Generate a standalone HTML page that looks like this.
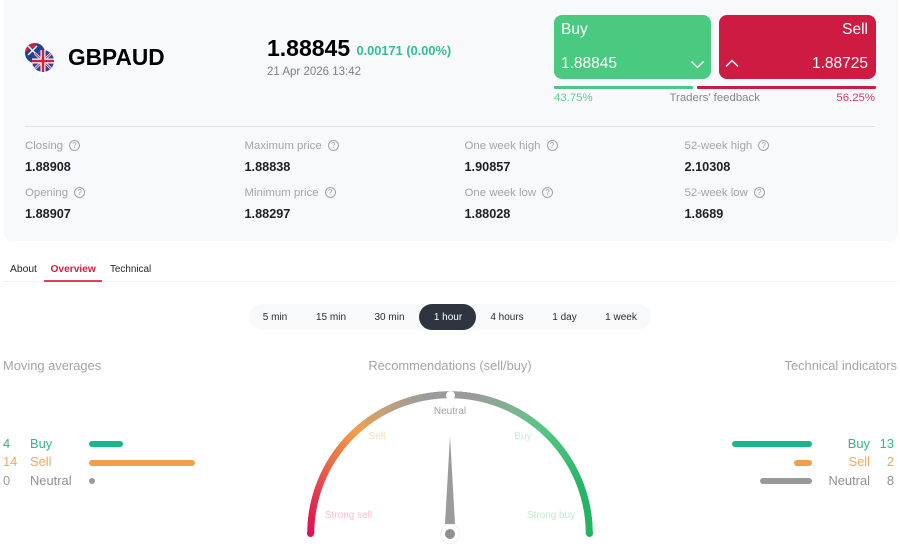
<!DOCTYPE html>
<html><head><meta charset="utf-8"><style>
*{box-sizing:border-box;margin:0;padding:0}
html,body{width:900px;height:549px;overflow:hidden;background:#fff;font-family:"Liberation Sans",sans-serif}
#p{position:relative;width:900px;height:549px;overflow:hidden;background:#fff}
.a{position:absolute;white-space:nowrap}
.lab{font-size:11.400px;color:#a3a5aa;line-height:14px}
.val{font-size:12.700px;font-weight:bold;color:#1d2024;line-height:14px}
.q{display:inline-block;width:11px;height:11px;border:1px solid #a3a5aa;border-radius:50%;font-size:8px;line-height:9px;text-align:center;margin:1px 0 0 6px;vertical-align:top;color:#a3a5aa}
.t{font-size:10px;line-height:12px;color:#2a2d33;transform:translateX(-50%)}
.h{font-size:12.900px;color:#a3a5aa;line-height:15px}
.row{font-size:12.900px;line-height:15px}
.bar{position:absolute;height:6px;border-radius:3px}
</style></head><body><div id="p">
<div class="a" style="left:4px;top:0;width:894px;height:241px;background:#f8f9fb;border-radius:0 0 8px 8px"></div>

<svg class="a" style="left:24px;top:42px" width="32" height="32" viewBox="0 0 32 32">
<circle cx="11" cy="11" r="10" fill="#23408e"/>
<path d="M1 11A10 10 0 0 1 11 1L14 5 6 6z" fill="#d8203a"/>
<path d="M4 4L13 13M13 4L4 13" stroke="#fff" stroke-width="1.500"/>
<circle cx="19" cy="19" r="11" fill="#264a9a"/>
<path d="M11 11.500L27 26.500M27 11.500L11 26.500" stroke="#fff" stroke-width="2.400"/>
<path d="M11 11.500L27 26.500M27 11.500L11 26.500" stroke="#d8203a" stroke-width="1"/>
<path d="M19 8V30M8 19H30" stroke="#fff" stroke-width="5"/>
<path d="M19 8V30M8 19H30" stroke="#d8203a" stroke-width="2.600"/>
</svg>
<div class="a" style="left:68px;top:44px;font-size:22.700px;font-weight:bold;color:#000;line-height:26px">GBPAUD</div>

<div class="a" style="left:267px;top:35px;font-size:23px;font-weight:bold;color:#000;line-height:26px">1.88845</div>
<div class="a" style="left:356.500px;top:44px;font-size:12.800px;font-weight:bold;color:#2fbf92;line-height:14px">0.00171 (0.00%)</div>
<div class="a" style="left:267px;top:65px;font-size:11.500px;color:#7c7f85;line-height:14px">21 Apr 2026 13:42</div>

<div class="a" style="left:554px;top:15px;width:157px;height:64px;background:#4aca80;border-radius:8px"></div>
<div class="a" style="left:718.500px;top:15px;width:157px;height:64px;background:#cd1b41;border-radius:8px"></div>
<div class="a" style="left:561px;top:21px;font-size:15.500px;color:#fff;line-height:18px">Buy</div>
<div class="a" style="right:32px;top:21px;font-size:15.500px;color:#fff;line-height:18px">Sell</div>
<div class="a" style="left:561px;top:55px;font-size:15.500px;color:#fff;line-height:18px">1.88845</div>
<div class="a" style="right:32px;top:55px;font-size:15.500px;color:#fff;line-height:18px">1.88725</div>
<svg class="a" style="left:690px;top:60px" width="16" height="10"><path d="M1.500 1.500L7.500 7.500L13.500 1.500" fill="none" stroke="#fff" stroke-width="1.500"/></svg>
<svg class="a" style="left:725px;top:59px" width="16" height="10"><path d="M1 7.500L7 1.500L13 7.500" fill="none" stroke="#fff" stroke-width="1.500"/></svg>
<div class="a" style="left:554px;top:86px;width:138.500px;height:3px;background:#4aca80;border-radius:1px"></div>
<div class="a" style="left:697px;top:86px;width:178.500px;height:3px;background:#cd1b41;border-radius:1px"></div>
<div class="a" style="left:554px;top:91px;font-size:11.400px;color:#5fce8f;line-height:14px">43.75%</div>
<div class="a" style="left:669.500px;top:91px;font-size:11.400px;color:#85878c;line-height:14px">Traders' feedback</div>
<div class="a" style="right:25px;top:91px;font-size:11.400px;color:#d63a60;line-height:14px">56.25%</div>

<div class="a" style="left:25px;top:126px;width:850px;height:1px;background:#e1e3e7"></div>

<div class="a lab" style="left:25px;top:139px">Closing<span class="q">?</span></div>
<div class="a val" style="left:25px;top:160px">1.88908</div>
<div class="a lab" style="left:25px;top:186px">Opening<span class="q">?</span></div>
<div class="a val" style="left:25px;top:207px">1.88907</div>
<div class="a lab" style="left:244.500px;top:139px">Maximum price<span class="q">?</span></div>
<div class="a val" style="left:244.500px;top:160px">1.88838</div>
<div class="a lab" style="left:244.500px;top:186px">Minimum price<span class="q">?</span></div>
<div class="a val" style="left:244.500px;top:207px">1.88297</div>
<div class="a lab" style="left:464.500px;top:139px">One week high<span class="q">?</span></div>
<div class="a val" style="left:464.500px;top:160px">1.90857</div>
<div class="a lab" style="left:464.500px;top:186px">One week low<span class="q">?</span></div>
<div class="a val" style="left:464.500px;top:207px">1.88028</div>
<div class="a lab" style="left:684.500px;top:139px">52-week high<span class="q">?</span></div>
<div class="a val" style="left:684.500px;top:160px">2.10308</div>
<div class="a lab" style="left:684.500px;top:186px">52-week low<span class="q">?</span></div>
<div class="a val" style="left:684.500px;top:207px">1.8689</div>

<div class="a" style="left:3px;top:281px;width:894px;height:1px;background:#f1f2f4"></div>
<div class="a" style="left:10px;top:263px;font-size:10.300px;color:#23262b;line-height:13px">About</div>
<div class="a" style="left:50.500px;top:263px;font-size:10.200px;font-weight:bold;color:#d2204a;line-height:13px">Overview</div>
<div class="a" style="left:110px;top:263px;font-size:9.900px;color:#23262b;line-height:13px">Technical</div>
<div class="a" style="left:43.500px;top:280px;width:58.500px;height:2px;background:#e0405f"></div>

<div class="a" style="left:249px;top:304px;width:402px;height:26px;background:#f8f9fb;border-radius:13px"></div>
<div class="a" style="left:419px;top:304px;width:57px;height:26px;background:#2f3441;border-radius:13px"></div>
<div class="a t" style="left:275px;top:312px">5 min</div>
<div class="a t" style="left:331px;top:312px">15 min</div>
<div class="a t" style="left:389.500px;top:312px">30 min</div>
<div class="a t" style="left:448px;top:312px;color:#fff">1 hour</div>
<div class="a t" style="left:507px;top:312px">4 hours</div>
<div class="a t" style="left:564.500px;top:312px">1 day</div>
<div class="a t" style="left:621px;top:312px">1 week</div>

<div class="a h" style="left:3px;top:358px">Moving averages</div>
<div class="a h" style="left:450px;top:358px;transform:translateX(-50%)">Recommendations (sell/buy)</div>
<div class="a h" style="right:3px;top:358px">Technical indicators</div>

<div class="a row" style="left:3px;top:436px;color:#2bb98e">4</div>
<div class="a row" style="left:30px;top:436px;color:#2bb98e">Buy</div>
<div class="bar" style="left:89px;top:441px;width:34px;background:#18b68c"></div>
<div class="a row" style="left:3px;top:454px;color:#f2a85f">14</div>
<div class="a row" style="left:30px;top:454px;color:#f2a85f">Sell</div>
<div class="bar" style="left:89px;top:459.500px;width:106px;background:#f29f4b"></div>
<div class="a row" style="left:3px;top:473px;color:#9a9ca1">0</div>
<div class="a row" style="left:30px;top:473px;color:#8f9197">Neutral</div>
<div class="bar" style="left:89px;top:478px;width:6px;background:#999"></div>

<div class="a row" style="right:30px;top:436px;color:#2bb98e">Buy</div>
<div class="a row" style="right:6px;top:436px;color:#2bb98e">13</div>
<div class="bar" style="left:732px;top:441px;width:79.500px;background:#18b68c"></div>
<div class="a row" style="right:30px;top:454px;color:#f2a85f">Sell</div>
<div class="a row" style="right:6px;top:454px;color:#f2a85f">2</div>
<div class="bar" style="left:793.500px;top:459.500px;width:18px;background:#f29f4b"></div>
<div class="a row" style="right:30px;top:473px;color:#8f9197">Neutral</div>
<div class="a row" style="right:6px;top:473px;color:#8f9197">8</div>
<div class="bar" style="left:760px;top:478px;width:51.500px;background:#999"></div>

<div class="a" style="left:307px;top:391px;width:286px;height:143px;overflow:hidden">
<div style="width:286px;height:143px;border-radius:143px 143px 0 0;background:conic-gradient(from 270deg at 143px 143px,#e01157 0deg,#e0304f 14deg,#ea7349 33deg,#f29f4b 48deg,#bfa27c 62deg,#9b9b9b 80deg,#9b9b9b 100deg,#7fb291 116deg,#55c585 132deg,#27b567 160deg,#20b460 180deg,#20b460 360deg);-webkit-mask:radial-gradient(circle 143px at 143px 143px,transparent 135.500px,#000 136px,#000 142.700px,transparent 143px);mask:radial-gradient(circle 143px at 143px 143px,transparent 135.500px,#000 136px,#000 142.700px,transparent 143px)"></div>
</div>
<div class="a" style="left:307px;top:530.300px;width:7.200px;height:7.200px;border-radius:50%;background:#e01157"></div>
<div class="a" style="left:585.800px;top:530.300px;width:7.200px;height:7.200px;border-radius:50%;background:#20b460"></div>
<div class="a" style="left:445.500px;top:390.500px;width:9px;height:9px;border-radius:50%;background:#fff"></div>

<div class="a" style="left:450px;top:406px;font-size:10px;line-height:12px;color:#a0a1a5;transform:translateX(-50%)">Neutral</div>
<div class="a" style="left:377px;top:431px;font-size:10px;line-height:12px;color:#f8dcbc;transform:translateX(-50%)">Sell</div>
<div class="a" style="left:523px;top:431px;font-size:10px;line-height:12px;color:#c9ecdd;transform:translateX(-50%)">Buy</div>
<div class="a" style="left:348.500px;top:510px;font-size:10px;line-height:12px;color:#f9bfd2;transform:translateX(-50%)">Strong sell</div>
<div class="a" style="left:551px;top:510px;font-size:10px;line-height:12px;color:#c0ebd3;transform:translateX(-50%)">Strong buy</div>

<svg class="a" style="left:430px;top:430px;display:block" width="40" height="119" viewBox="0 0 40 119">
<path d="M20 6L25 94H15Z" fill="#9b9b9b"/>
<circle cx="20" cy="104" r="9.500" fill="#fff" stroke="#f0f0f0" stroke-width="1"/>
<circle cx="20" cy="104" r="5" fill="#8f8f8f"/>
</svg>
</div></body></html>
